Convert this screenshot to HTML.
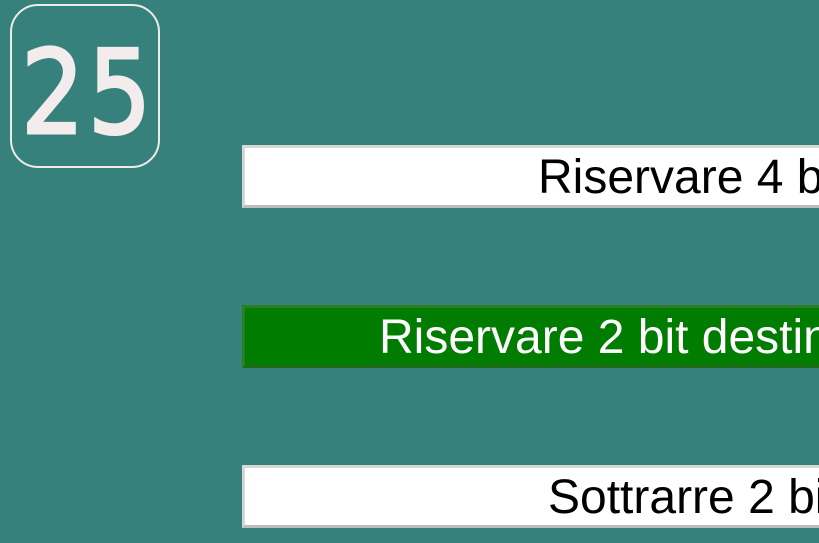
<!DOCTYPE html>
<html><head><meta charset="utf-8"><style>
html,body{margin:0;padding:0;width:819px;height:543px;overflow:hidden;background:#37817c;font-family:"Liberation Sans",Arial,sans-serif}
.badge{position:absolute;left:10px;top:4px;width:146px;height:160px;border:2px solid #eeeae8;border-radius:28px;box-sizing:content-box}
.num{position:absolute;left:21px;top:24px;font-family:"DejaVu Sans",sans-serif;font-size:116px;line-height:140px;color:#f2ecec;-webkit-text-stroke:3px #f2ecec;letter-spacing:4px;transform:scaleX(0.86);transform-origin:0 0;white-space:nowrap}
.box{position:absolute;left:242px;width:577px;height:63px;box-sizing:border-box;border:3px solid;border-right:0;border-color:#d6d6d6 #bdbdbd #bdbdbd #d6d6d6;background:#fff;overflow:hidden}
.box span{position:absolute;top:2px;font-size:48px;line-height:56px;white-space:nowrap;color:#000}
.g{background:#007c00;border-color:#2a7f22 #1f6a1a #1f6a1a #2a7f22}
.g span{color:#fff}
</style></head><body>
<div class="badge"></div>
<div class="num">25</div>
<div class="box" style="top:145px"><span style="left:293px">Riservare 4 bit destinati</span></div>
<div class="box g" style="top:305px"><span style="left:134px">Riservare 2 bit destinati</span></div>
<div class="box" style="top:465px"><span style="left:303px">Sottrarre 2 bit</span></div>
</body></html>
